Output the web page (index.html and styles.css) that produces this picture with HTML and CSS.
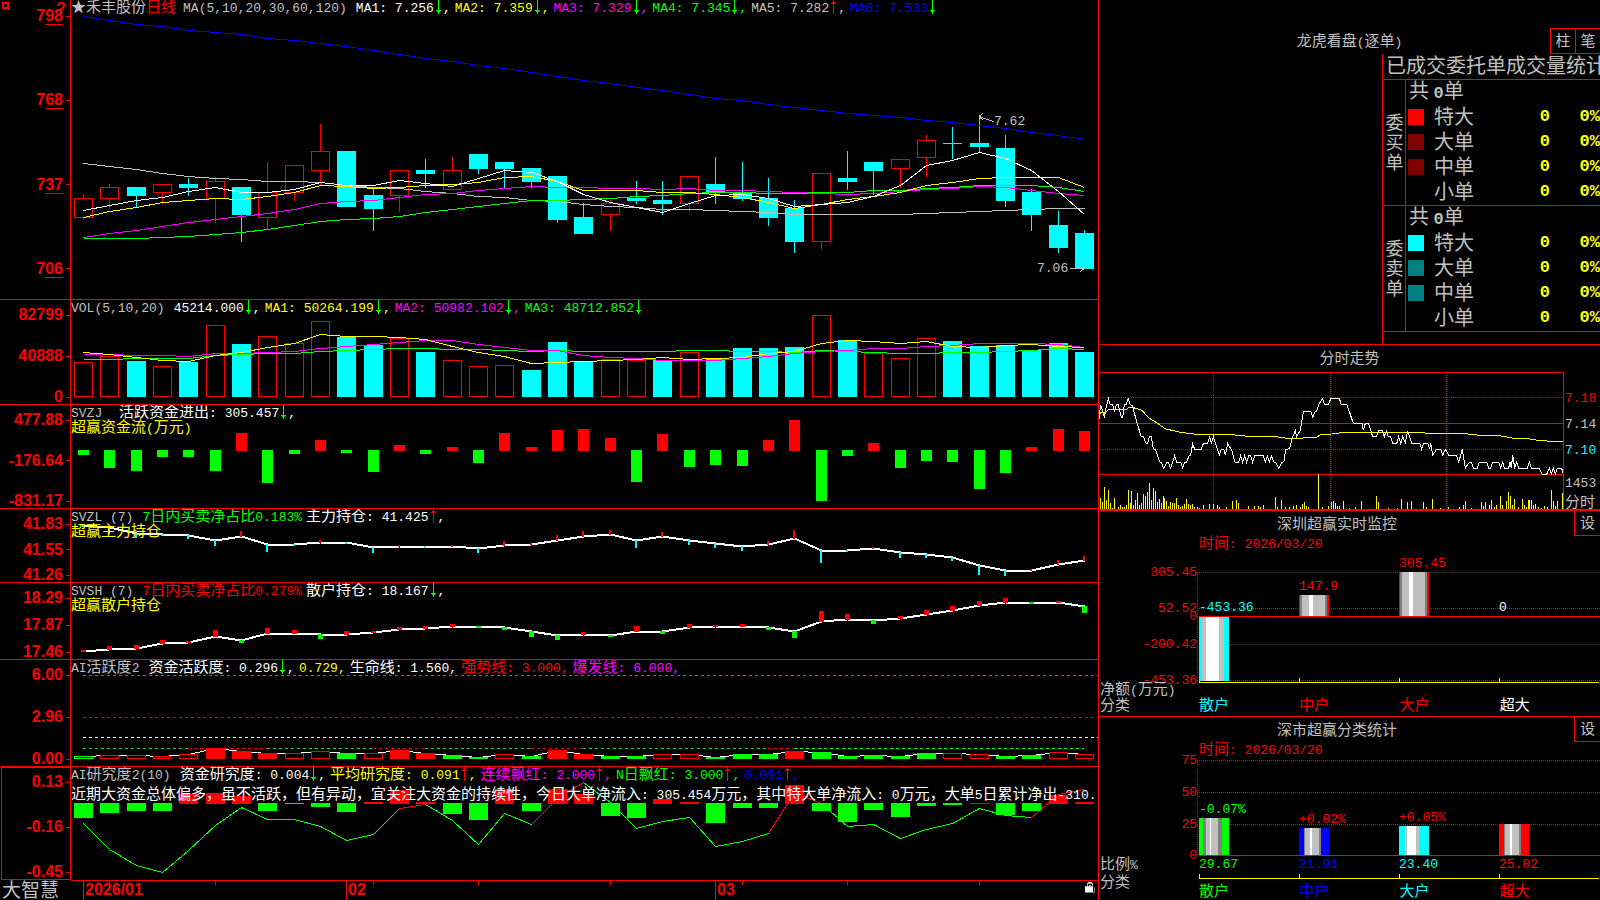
FILE: index.html
```html
<!DOCTYPE html>
<html lang="zh-CN">
<head>
<meta charset="utf-8">
<title>禾丰股份 日线 - 大智慧</title>
<link rel="stylesheet" href="styles.css">
</head>
<body>
<svg class="defs" aria-hidden="true">
  <symbol id="down" viewBox="0 0 9 15"><path d="M4 0h1v10h2v1h-1v1h-1v2h-1v-2h-1v-1h-1v-1h2z" fill="#0f0"/></symbol>
  <symbol id="up" viewBox="0 0 9 15"><path d="M4 0h1v2h1v1h1v1h-2v10h-1v-10h-2v-1h1v-1h1z" fill="#f00"/></symbol>
</svg>
<div class="app">
  <main class="left">
    <section class="panel main-panel">
      <div class="axis">
        <svg class="mark" viewBox="0 0 8 8" shape-rendering="crispEdges"><path d="M1 1h5v5h-5zM6 7h2" fill="none" stroke="#f00" stroke-width="2"/></svg>
        <span class="help">?</span>
        <span>7<u>98</u></span><span>7<u>68</u></span><span>7<u>37</u></span><span>7<u>06</u></span>
      </div>
      <div class="plot" id="main">
        <div class="caption"><span class="name"><i>★禾丰股份</i><i class="red">日线</i><span class="params">MA(5,10,20,30,60,120)</span></span><span class="white">MA1: 7.256<svg class="arr"><use href="#down"/></svg>,</span><span class="yellow">MA2: 7.359<svg class="arr"><use href="#down"/></svg>,</span><span class="magenta">MA3: 7.329<svg class="arr"><use href="#down"/></svg>,</span><span class="green">MA4: 7.345<svg class="arr"><use href="#down"/></svg>,</span><span>MA5: 7.282<svg class="arr"><use href="#up"/></svg>,</span><span class="blue">MA6: 7.533<svg class="arr"><use href="#down"/></svg></span></div>
      </div>
    </section>
    <section class="panel">
      <div class="axis"><span>82799</span><span>40888</span><span>0</span></div>
      <div class="plot" id="vol">
        <div class="caption"><span class="name">VOL(5,10,20)</span><span class="white">45214.000<svg class="arr"><use href="#down"/></svg>,</span><span class="yellow">MA1: 50264.199<svg class="arr"><use href="#down"/></svg>,</span><span class="magenta">MA2: 50982.102<svg class="arr"><use href="#down"/></svg>,</span><span class="green">MA3: 48712.852<svg class="arr"><use href="#down"/></svg></span></div>
      </div>
    </section>
    <section class="panel">
      <div class="axis"><span>477.88</span><span>-176.64</span><span>-831.17</span></div>
      <div class="plot" id="svzj">
        <div class="caption"><span class="name">SVZJ&nbsp;</span><span class="white"><i>活跃资金进出</i>: 305.457<svg class="arr"><use href="#down"/></svg>,</span></div>
        <div class="caption yellow"><span><i>超赢资金流</i>(<i>万元</i>)</span></div>
      </div>
    </section>
    <section class="panel">
      <div class="axis"><span>41.83</span><span>41.55</span><span>41.26</span></div>
      <div class="plot" id="svzl">
        <div class="caption"><span class="name">SVZL (7)</span><span class="green">7<i>日内买卖净占比</i>0.183%</span><span class="white"><i>主力持仓</i>: 41.425<svg class="arr"><use href="#up"/></svg>,</span></div>
        <div class="caption yellow"><span><i>超赢主力持仓</i></span></div>
      </div>
    </section>
    <section class="panel">
      <div class="axis"><span>18.29</span><span>17.87</span><span>17.46</span></div>
      <div class="plot" id="svsh">
        <div class="caption"><span class="name">SVSH (7)</span><span class="red">7<i>日内买卖净占比</i>0.279%</span><span class="white"><i>散户持仓</i>: 18.167<svg class="arr"><use href="#down"/></svg>,</span></div>
        <div class="caption yellow"><span><i>超赢散户持仓</i></span></div>
      </div>
    </section>
    <section class="panel">
      <div class="axis"><span>6.00</span><span>2.96</span><span>0.00</span></div>
      <div class="plot" id="active">
        <div class="caption"><span class="name">AI<i>活跃度</i>2</span><span class="white"><i>资金活跃度</i>: 0.296<svg class="arr"><use href="#down"/></svg>,</span><span class="yellow">0.729,</span><span class="white"><i>生命线</i>: 1.560,</span><span class="red"><i>强势线</i>: 3.000,</span><span class="magenta"><i>爆发线</i>: 6.000,</span></div>
      </div>
    </section>
    <section class="panel selected">
      <div class="axis"><span>0.13</span><span>-0.16</span><span>-0.45</span></div>
      <div class="plot" id="study">
        <div class="caption"><span class="name">AI<i>研究度</i>2(10)</span><span class="white"><i>资金研究度</i>: 0.004<svg class="arr"><use href="#down"/></svg>,</span><span class="yellow"><i>平均研究度</i>: 0.091<svg class="arr"><use href="#up"/></svg>,</span><span class="magenta"><i>连续飘红</i>: 2.000<svg class="arr"><use href="#up"/></svg>,</span><span class="green">N<i>日飘红</i>: 3.000<svg class="arr"><use href="#up"/></svg>,</span><span class="blue">0.091<svg class="arr"><use href="#up"/></svg>,</span></div>
        <div class="caption comment white"><span><i>近期大资金总体偏多，虽不活跃，但有异动，宜关注大资金的持续性，今日大单净流入</i>: 305.454<i>万元，其中特大单净流入</i>: 0<i>万元，大单</i>5<i>日累计净出</i>-310.</span></div>
      </div>
    </section>
    <footer class="timeline">
      <div class="brand">大智慧</div>
      <div class="plot" id="time">
        <svg class="lock" viewBox="0 0 11 12" shape-rendering="crispEdges"><path d="M2 1h1v-1h4v1h1v3h-1v-2h-4v2h-1z" fill="#c0c0c0"/><path d="M4 3h2v1h-2z" fill="#c0c0c0"/><path d="M0 4h8v1h-8z" fill="#c0c0c0"/><path d="M0 5h8v5h-8z" fill="#fff"/><path d="M9 5h1v6h-10v-1h9z" fill="#808080"/></svg>
      </div>
    </footer>
  </main>

  <aside class="right">
    <section class="orders">
      <header class="bar"><h2>龙虎看盘<i>(</i>逐单<i>)</i></h2><div class="tools"><button type="button">柱</button><button type="button">笔</button></div></header>
      <div class="stats">
        <h3>已成交委托单成交量统计</h3>
        <table>
          <colgroup><col class="c-side"><col class="c-key"><col class="c-name"><col class="c-num"><col></colgroup>
          <tbody>
            <tr><th rowspan="5" class="side">委<br>买<br>单</th><td colspan="4" class="total">共 <b>0</b>单</td></tr>
            <tr><td class="key"><span class="swatch s-red"></span></td><th scope="row">特大</th><td>0</td><td>0%</td></tr>
            <tr><td class="key"><span class="swatch s-maroon"></span></td><th scope="row">大单</th><td>0</td><td>0%</td></tr>
            <tr><td class="key"><span class="swatch s-maroon"></span></td><th scope="row">中单</th><td>0</td><td>0%</td></tr>
            <tr><td class="key"></td><th scope="row">小单</th><td>0</td><td>0%</td></tr>
          </tbody>
          <tbody>
            <tr><th rowspan="5" class="side">委<br>卖<br>单</th><td colspan="4" class="total">共 <b>0</b>单</td></tr>
            <tr><td class="key"><span class="swatch s-cyan"></span></td><th scope="row">特大</th><td>0</td><td>0%</td></tr>
            <tr><td class="key"><span class="swatch s-teal"></span></td><th scope="row">大单</th><td>0</td><td>0%</td></tr>
            <tr><td class="key"><span class="swatch s-teal"></span></td><th scope="row">中单</th><td>0</td><td>0%</td></tr>
            <tr><td class="key"></td><th scope="row">小单</th><td>0</td><td>0%</td></tr>
          </tbody>
        </table>
      </div>
    </section>
    <section class="intraday">
      <h2>分时走势</h2>
      <div class="chart"><div class="box" id="intra"></div>
        <div class="scale"><span class="price red">7.18</span><span class="price">7.14</span><span class="price cyan">7.10</span><span class="count">1453</span><span class="zh">分时</span></div>
      </div>
    </section>
    <section class="flow">
      <header class="bar"><h2>深圳超赢实时监控</h2><div class="tools"><button type="button">设</button></div></header>
      <p class="date"><i>时间</i>: 2026/03/20</p>
      <div class="chart" id="flow"></div>
      <div class="cats"><span class="cyan">散户</span><span class="red">中户</span><span class="red">大户</span><span class="white">超大</span></div>
    </section>
    <section class="share">
      <header class="bar"><h2>深市超赢分类统计</h2><div class="tools"><button type="button">设</button></div></header>
      <p class="date"><i>时间</i>: 2026/03/20</p>
      <div class="chart" id="share"></div>
      <div class="cats"><span class="green">散户</span><span class="blue">中户</span><span class="cyan">大户</span><span class="red">超大</span></div>
    </section>
  </aside>
</div>
<script src="charts.js"></script>
</body>
</html>
```
FILE: styles.css
```css
:root {
  --red: #f00;
  --mono: "Liberation Mono", "Noto Sans CJK SC", monospace;
  --zh: "Noto Sans CJK SC", sans-serif;
}
* { box-sizing: border-box; }
body { margin: 0; background: #000; color: #c0c0c0; font: 13px/15px var(--mono); }
i { font: 15px/0 var(--zh); }
h2, h3, p { margin: 0; font-weight: 400; }
.defs { position: absolute; width: 0; height: 0; }

.white { color: #fff; }
.yellow { color: #ff0; }
.magenta { color: #f0f; }
.green { color: #0f0; }
.blue { color: #00f; }
.cyan { color: #0ff; }
.red { color: #f00; }

.app { display: grid; grid-template-columns: minmax(0, 1fr) 502px; height: 100vh; min-height: 720px; overflow: hidden; }

/* Left: stacked indicator panels */
.left { display: grid; grid-template-rows: minmax(0, 300fr) minmax(0, 105fr) minmax(0, 104fr) minmax(0, 74fr) minmax(0, 77fr) minmax(0, 107fr) minmax(0, 114fr) minmax(0, 19fr); }
.panel { display: grid; grid-template-columns: 71px minmax(0, 1fr); border-bottom: 1px solid var(--red); }
.axis { position: relative; display: flex; flex-direction: column; justify-content: space-between; padding-top: 8px; border-right: 1px solid var(--red); color: var(--red); font: bold 16px/14px "Liberation Sans", sans-serif; }
.axis > span:not(.help) { display: flex; align-items: center; justify-content: flex-end; }
.axis > span:not(.help)::after { content: ""; width: 4px; height: 1px; margin-left: 3px; background: var(--red); }
.axis u { text-decoration-thickness: 1px; text-underline-offset: 3px; }
.main-panel .axis { padding-top: 9px; padding-bottom: 23px; }
.mark { position: absolute; left: 2px; top: 2px; width: 8px; height: 8px; }
.help { position: absolute; left: 56px; top: 2px; }
.selected { border-bottom: 0; }
.selected .axis { margin: 0 0 1px 1px; border: 1px solid var(--red); padding-top: 7px; }
.selected .plot { border-bottom: 1px solid var(--red); }

.plot { position: relative; overflow: hidden; }
.canvas { position: absolute; left: 0; top: 0; width: 100%; height: 100%; shape-rendering: crispEdges; }
.canvas * { vector-effect: non-scaling-stroke; }
.caption { position: relative; z-index: 1; display: flex; gap: 4px; height: 15px; line-height: 17px; white-space: pre; }
.caption .name { margin-right: 5px; color: #c0c0c0; }
.params { padding-left: 7px; }
.comment { margin-top: 5px; }
.arr { width: 9px; height: 15px; vertical-align: top; }
.label { position: absolute; z-index: 1; line-height: 16px; white-space: pre; transform: translateY(-50%); }
.label.end { transform: translate(-100%, -50%); }
.label.month { font: bold 16px/16px "Liberation Sans", sans-serif; }

.timeline { display: grid; grid-template-columns: 71px minmax(0, 1fr); }
.brand { padding-left: 2px; font: 19px/16px var(--zh); }
.lock { position: absolute; right: 2px; top: 1px; width: 11px; height: 12px; }

/* Right: order statistics and summary charts */
.right { display: grid; grid-template-rows: minmax(0, 345fr) minmax(0, 166fr) minmax(0, 206fr) minmax(0, 183fr); border-left: 1px solid var(--red); overflow: hidden; }
.right > section { display: flex; flex-direction: column; min-width: 0; border-bottom: 1px solid var(--red); }
.right > .share { border-bottom: 0; }
.right h2 { flex: 1; text-align: center; font: 15px/24px var(--zh); }
.right h2 i { font: 13px/24px var(--mono); }
.bar { display: flex; position: relative; }
.tools { display: flex; }
.tools button { width: 26px; height: 26px; margin-left: -1px; padding: 0 0 2px; border: 1px solid var(--red); background: #000; color: #c0c0c0; font: 15px/22px var(--zh); }
.orders .bar { padding-top: 28px; }
.orders .tools { position: absolute; right: -1px; top: 28px; }
.orders .tools button { padding-bottom: 3px; }
.stats { flex: 1; align-self: flex-end; width: 218px; margin-top: 2px; border-left: 1px solid var(--red); overflow: hidden; }
.stats h3 { height: 25px; padding-left: 3px; font: 20px/21px var(--zh); white-space: nowrap; }
.stats table { table-layout: fixed; width: 216px; margin-left: 1px; border-spacing: 0; border-top: 1px solid var(--red); font: 20px/20px var(--zh); }
.c-side { width: 22px; }
.c-key { width: 28px; }
.c-name { width: 60px; }
.c-num { width: 56px; }
.stats td, .stats th { height: 25px; padding: 0; font-weight: 400; }
.stats tr:first-child td { height: 23px; }
.stats th.side { height: auto; padding: 0 1px 4px; border-right: 1px solid var(--red); border-bottom: 1px solid var(--red); font: 18px/20px var(--zh); }
.stats tr:last-child td, .stats tr:last-child th { height: 27px; border-bottom: 1px solid var(--red); }
.stats td { color: #ff0; text-align: right; font: bold 17px/20px var(--mono); }
.stats td.total { padding-left: 3px; color: #c0c0c0; text-align: left; font: 20px/20px var(--zh); }
.stats .total b { font: bold 17px/20px var(--mono); }
.stats td.key { padding-left: 2px; }
.stats th[scope] { padding-bottom: 2px; text-align: left; }
.swatch { display: block; width: 16px; height: 16px; }
.s-red { background: #f00; }
.s-maroon { background: #800000; }
.s-cyan { background: #0ff; }
.s-teal { background: #008080; }
.orders .bar h2 { height: 24px; }

.right > .intraday { border-bottom-width: 2px; }
.right .intraday h2 { flex: none; height: 27px; line-height: 23px; }
.chart { flex: 1; min-height: 0; position: relative; }
.intraday .chart { display: grid; grid-template-columns: minmax(0, 1fr) 36px; }
.box { position: relative; border-top: 1px solid var(--red); border-right: 1px solid var(--red); }
.scale { display: flex; flex-direction: column; padding: 19px 0 0 1px; line-height: 16px; }
.scale .price { margin-bottom: 10px; }
.scale .count { margin-top: auto; }
.scale .zh { font: 15px/17px var(--zh); }
.flow .tools button, .share .tools button { height: 25px; border-top: 0; border-right: 0; }
.date { height: 17px; padding-left: 100px; line-height: 17px; color: var(--red); }
.cats { display: grid; grid-template-columns: repeat(4, 1fr); height: 22px; padding-left: 100px; font: 15px/20px var(--zh); }
.share .cats { height: 18px; line-height: 16px; }
```
FILE: charts.js
```javascript
const NS = "http://www.w3.org/2000/svg";
const RED = "#f00", CYAN = "#0ff", GREEN = "#0f0", YELLOW = "#ff0", WHITE = "#fff",
      MAGENTA = "#f0f", GRAY = "#c0c0c0", BLUE = "#00f", DARK = "#808080";

function canvas(id, x, y, w, h) {
  const host = document.getElementById(id);
  const svg = document.createElementNS(NS, "svg");
  svg.setAttribute("class", "canvas");
  svg.setAttribute("viewBox", [x, y, w, h].join(" "));
  svg.setAttribute("preserveAspectRatio", "none");
  host.prepend(svg);
  const add = (tag, attrs) => {
    const n = document.createElementNS(NS, tag);
    for (const k in attrs) n.setAttribute(k, attrs[k]);
    svg.append(n);
  };
  return {
    fill: (a, b, cw, ch, c) => add("rect", { x: a, y: b, width: cw, height: ch, fill: c }),
    frame: (a, b, cw, ch, c, bg) => add("rect", { x: a + .5, y: b + .5, width: cw - 1, height: ch - 1, fill: bg || "none", stroke: c }),
    poly: (pts, c, w, dash) => add("polyline", { points: pts.map(p => p.join(",")).join(" "), fill: "none", stroke: c, "stroke-width": w || 1, "stroke-dasharray": dash || "none" }),
    label: (text, lx, ly, cls) => {
      const s = document.createElement("span");
      s.className = "label " + (cls || "");
      s.innerHTML = text;
      s.style.left = (lx - x) / w * 100 + "%";
      s.style.top = (ly - y) / h * 100 + "%";
      host.append(s);
    }
  };
}
const cx = i => Math.round(83 + 26.34 * i);
const series = (ys, from = 0) => ys.map((y, i) => [cx(i + from) + .5, y + .5]);

/* Daily candles: direction, high, body top, body bottom, low */
const main = canvas("main", 71, 0, 1027, 299);
const candles = [
  "R 195 198 218 220", "R 184 187 199 209", "C 187 187 196 207", "R 184 184 193 204", "C 178 184 188 196",
  "R 177 181 199 223", "C 187 187 215 242", "R 162 192 218 230", "R 165 165 193 201", "R 124 151 171 185",
  "C 151 151 207 207", "C 187 195 209 231", "R 170 170 196 212", "C 159 170 174 188", "R 157 170 190 190",
  "C 154 154 169 174", "C 162 162 169 188", "C 168 168 182 188", "C 176 176 220 223", "C 203 217 234 234",
  "R 200 203 215 231", "C 181 198 201 204", "C 181 200 204 215", "R 176 176 204 212", "C 157 184 192 204",
  "C 162 192 199 201", "C 178 198 218 226", "C 200 208 242 253", "R 173 173 242 250", "C 151 178 182 190",
  "C 162 162 171 195", "R 159 159 169 188", "R 135 140 158 177", "C 127 143 144 159", "C 115 143 147 153",
  "C 135 148 201 207", "C 189 192 215 231", "C 211 225 248 253", "C 230 233 269 269"
].map(s => s.split(" ").map((v, k) => k ? +v : v));
candles.forEach(([d, hi, top, bot, lo], i) => {
  const x = cx(i), c = d === "R" ? RED : CYAN;
  if (top > hi) main.fill(x, hi, 1, top - hi, c);
  if (lo > bot) main.fill(x, bot, 1, lo - bot, c);
  d === "R" ? main.frame(x - 9, top, 19, bot - top, c) : main.fill(x - 9, top, 19, bot - top, c);
});
main.poly(series([16,20,24,26,30,32,34,38,40,43,46,50,54,58,61,65,68,72,76,80,83,87,90,94,98,100,104,107,110,113,115,117,120,122,125,128,132,135,139]), BLUE);
main.poly(series([163,166,169,173,176,178,179,181,181,182,185,187,188,191,193,196,197,200,201,204,206,207,209,209,210,211,212,214,214,214,214,214,213,212,211,210,209,208,208]), GRAY);
main.poly(series([238,238,238,237,236,234,232,229,225,221,219,218,216,212,209,206,203,200,200,199,198,196,195,193,192,192,193,193,192,192,190,190,188,187,185,185,185,187,191]), GREEN);
main.poly(series([237,233,230,226,222,219,216,213,209,203,201,200,197,194,193,190,188,186,187,187,188,188,189,188,190,190,191,192,193,194,193,191,189,188,186,187,190,193,195]), MAGENTA);
main.poly(series([217,211,207,202,200,198,199,196,192,185,186,188,187,185,184,182,177,176,181,190,190,190,192,192,194,197,202,208,204,199,196,192,185,182,178,177,177,177,187]), YELLOW);
main.poly(series([210,205,200,197,191,187,192,192,189,182,185,185,180,183,186,178,170,172,181,194,202,207,212,203,195,194,198,206,204,202,196,185,165,160,152,158,170,191,214]), WHITE);
main.poly([[994, 121.5], [979.5, 117], [983, 113]], GRAY);
main.poly([[979.5, 117], [983, 120]], GRAY);
main.label("7.62", 994, 122);
main.poly([[1070, 268.5], [1084, 268.5]], GRAY);
main.poly([[1080, 265], [1084, 268.5], [1080, 272]], GRAY);
main.label("7.06", 1037, 269);

/* Volume */
const vol = canvas("vol", 71, 300, 1027, 104);
const volumeTops = [362,356,361,366,362,325,344,336,343,321,337,345,338,352,360,366,365,370,342,361,359,360,360,352,359,348,348,347,315,340,353,358,338,341,346,345,350,343,352];
const volumeUp = new Set([0,1,3,5,7,8,9,12,14,15,16,20,21,23,28,30,31,32]);
volumeTops.forEach((t, i) => volumeUp.has(i) ? vol.frame(cx(i) - 9, t, 19, 397 - t, RED) : vol.fill(cx(i) - 9, t, 19, 397 - t, CYAN));
vol.poly(series([359,359,358,358,358,355,354,353,353,351,350,349,348,348,349,349,350,351,350,351,351,351,351,350,350,351,351,352,350,351,352,353,353,352,352,351,350,348,349]), GREEN);
vol.poly(series([354,354,355,355,356,353,353,352,351,348,346,344,342,340,340,344,347,350,350,355,357,358,360,360,360,358,356,353,351,350,348,348,346,345,343,343,343,344,347]), MAGENTA);
vol.poly(series([352,354,357,360,361,355,352,347,343,334,336,336,337,339,346,352,356,363,362,361,360,359,357,359,358,357,353,351,343,340,341,343,341,346,347,345,344,346,347]), YELLOW);

/* Signed columns around a zero line */
function columns(c, zero, half, ends) {
  ends.forEach((e, i) => e > zero
    ? c.fill(cx(i) - half, zero, half * 2 + 1, e - zero, GREEN)
    : c.fill(cx(i) - half, e, half * 2 + 1, zero + 1 - e, RED));
}
const svzj = canvas("svzj", 71, 405, 1027, 103);
columns(svzj, 450, 5, [455,468,471,457,457,471,433,483,454,440,453,472,445,454,447,463,433,447,430,429,438,482,434,467,465,466,440,420,501,456,443,468,461,462,489,473,447,429,431]);

/* Holdings: thick line with signed marks */
function holdings(c, ys, deltas, width, down) {
  c.poly(series(ys), WHITE, 2);
  deltas.forEach((d, i) => {
    const x = cx(i) - Math.floor(width / 2);
    d > 0 ? c.fill(x, ys[i] - d, width, d + 1, RED) : c.fill(x, ys[i], width, -d + 1, down);
  });
}
holdings(canvas("svzl", 71, 509, 1027, 73),
  [525,527,533,534,535,540,536,544,544,542,542,547,546,546,546,548,545,544,540,536,534,540,536,540,543,546,544,538,550,550,548,552,554,557,565,570,570,564,560],
  [-1,-6,-4,-1,-3,-5,5,-7,-1,2,-1,-5,1,-1,1,-4,4,1,5,5,4,-7,4,-4,-4,-4,3,8,-12,-1,1,-5,-3,-3,-9,-5,1,4,4], 2, CYAN);
holdings(canvas("svsh", 71, 583, 1027, 76),
  [651,649,648,643,642,636,640,633,633,634,634,632,629,628,626,626,627,631,635,634,635,631,631,627,626,626,627,631,621,619,620,618,614,610,605,602,602,602,606],
  [1,3,3,3,1,6,-2,5,3,-4,3,1,2,2,2,-1,-2,-5,-4,2,-1,5,-2,3,1,2,-2,-6,10,5,-3,2,4,4,4,4,-1,1,-6], 5, GREEN);

/* Activity */
const act = canvas("active", 71, 660, 1027, 106);
act.poly([[83, 675.5], [1098, 675.5]], MAGENTA, 1, "3 3");
act.poly([[83, 717.5], [1098, 717.5]], RED, 1, "3 3");
act.poly([[83, 737.5], [1098, 737.5]], WHITE, 1, "3 3");
[[0, 4, GREEN], [4, 7, RED], [7, 11, GREEN], [11, 13, RED], [13, 17, GREEN], [17, 19, RED], [19, 26, GREEN], [26, 27, RED], [27, 38, GREEN]]
  .forEach(([a, b, c]) => act.poly([[cx(a), 748.5], [cx(b), 748.5]], c, 1, "3 3"));
const activeTops = [756,755,755,756,754,748,751,753,753,751,753,753,750,753,755,757,754,756,750,754,756,756,754,754,757,754,754,751,752,756,755,756,753,753,754,756,755,752,754];
act.poly(series(activeTops), WHITE);
[..."gooooRRRooGoRRGGoGRRGGooGGGRGGGGGooGGoo"].forEach((k, i) => {
  const t = activeTops[i], x = cx(i) - 9;
  if (k === "R" || k === "G") act.fill(x, t, 19, 759 - t, k === "R" ? RED : GREEN);
  else act.frame(x, t, 19, 759 - t, k === "o" ? RED : GREEN, "#000");
});

/* Research */
const study = canvas("study", 71, 767, 1027, 113);
const research = [823,849,865,872,850,825,807,819,819,826,840,834,808,804,820,844,813,824,798,782,802,828,821,817,846,841,833,792,803,826,824,838,829,823,808,815,817,794,789];
study.poly(series(research), GREEN);
[[12, 13], [17, 19], [26, 28], [36, 38]].forEach(([a, b]) => study.poly(series(research.slice(a, b + 1), a), RED));
columns(study, 803, 9, [818,813,811,811,794,793,796,811,804,807,812,802,790,802,814,820,789,811,789,794,816,818,799,802,823,808,808,785,811,822,810,817,806,805,803,815,811,795,802]);

/* Time scale */
const time = canvas("time", 71, 881, 1027, 19);
[[0, "2026/01"], [10, "02"], [24, "03"]].forEach(([i, t]) => {
  time.fill(cx(i), 881, 1, 19, RED);
  time.label(t, cx(i) + 2, 890, "month red");
});
[1, 5, 11, 15, 20, 25, 29, 34].forEach(i => time.fill(cx(i), 881, 1, 4, RED));

/* Intraday */
const intra = canvas("intra", 27, 99, 1392, 408);
[370, 721, 1069].forEach(x => intra.poly([[x + 1, 99], [x + 1, 507]], RED, 1, "1 1"));
[173, 329].forEach(y => intra.poly([[27, y], [1420, y]], RED, 1, "1 1"));
[251, 404].forEach(y => intra.poly([[27, y], [1420, y]], RED));
const pairs = s => s.split(" ").map(p => p.split(",").map(Number));
pairs("31,33 37,21 43,66 49,27 55,57 61,18 67,3 73,33 85,6 91,12 97,6 103,6 109,12 115,57 121,18 124,54 130,12 136,27 142,48 148,12 154,18 160,45 166,40 172,51 178,78 184,27 190,63 196,54 202,21 208,30 214,18 220,39 223,34 229,24 235,9 241,21 247,18 253,17 259,33 265,12 271,6 277,9 283,15 289,30 295,15 301,12 307,15 313,6 322,6 328,3 340,12 358,15 370,15 382,12 388,6 409,6 427,24 439,27 445,18 475,9 493,9 505,9 511,6 520,12 556,36 562,6 574,27 586,6 598,6 610,9 619,12 631,6 637,15 643,21 649,9 655,6 685,105 697,6 715,9 724,21 730,24 736,18 742,9 748,9 760,24 778,3 796,6 814,24 859,39 865,21 895,3 922,3 934,30 952,21 964,24 1000,21 1010,6 1027,30 1050,3 1075,6 1108,6 1120,12 1126,24 1144,3 1174,21 1180,9 1186,21 1198,12 1204,27 1213,6 1219,12 1231,39 1237,12 1249,24 1255,51 1261,39 1267,12 1273,30 1285,6 1297,30 1303,12 1309,6 1315,27 1318,26 1324,27 1330,12 1336,15 1345,6 1354,3 1363,9 1372,6 1384,57 1390,24 1396,9 1402,24 1416,47")
  .forEach(([x, h]) => intra.fill(x - 1, 507 - h, 3, h, YELLOW));
intra.poly(pairs("27,220 50,215 55,209 108,209 116,203 130,203 156,211 175,233 200,248 225,266 270,277 320,283 425,284 475,289 555,290 600,296 680,292 692,284 725,282 760,277 1000,277 1010,281 1125,281 1180,287 1228,287 1272,295 1315,296 1345,301 1385,304 1420,304"), YELLOW);
intra.poly(pairs("27,236 32,194 37,209 43,233 47,209 55,176 60,193 68,194 73,214 79,194 85,194 94,233 98,232 103,194 108,194 115,176 121,194 127,196 140,245 153,288 160,290 168,309 173,309 178,290 184,290 190,326 197,330 209,366 214,368 221,385 230,367 235,368 242,385 254,347 260,367 272,367 278,384 283,368 290,367 297,347 302,346 308,311 314,328 334,328 340,311 353,309 359,290 364,310 370,290 376,310 388,346 394,328 403,330 406,346 413,311 425,330 434,366 446,367 452,347 458,367 464,347 470,367 476,347 482,347 488,367 494,347 520,347 526,367 532,347 538,366 544,347 551,366 557,367 566,385 575,368 582,364 587,328 599,326 608,290 616,272 620,290 631,271 640,216 662,214 668,232 676,214 680,213 686,194 698,176 704,194 715,193 723,175 748,175 754,194 771,194 790,250 816,250 820,271 826,250 836,251 848,290 859,290 865,272 877,272 883,290 889,272 895,290 902,290 908,311 920,311 926,290 932,311 938,290 946,308 953,272 965,310 990,311 995,328 1000,311 1014,311 1019,328 1022,310 1028,346 1040,328 1052,328 1058,346 1066,328 1076,346 1100,347 1106,366 1112,346 1117,328 1126,384 1138,367 1144,367 1150,384 1162,384 1168,367 1190,367 1196,384 1202,384 1208,367 1226,367 1232,384 1238,367 1243,384 1256,384 1260,367 1264,384 1268,346 1274,382 1280,367 1286,384 1312,384 1318,367 1324,384 1348,385 1356,403 1370,403 1378,385 1384,403 1390,385 1396,403 1402,385 1415,385 1420,403"), WHITE);

/* Striped cylinder bars: [colour, width] pairs from left to right */
function cylinder(c, x, top, bottom, stripes) {
  stripes.forEach(([color, w]) => { c.fill(x, top, w, bottom - top, color); x += w; });
}
function grid(c, dotted, solid, top, bottom, base) {
  dotted.forEach(y => c.poly([[1197, y + .5], [1600, y + .5]], RED, 1, "1 1"));
  c.poly([[1197.5, top], [1197.5, bottom]], RED, 1, "1 1");
  c.fill(1199, solid, 401, 1, RED);
  c.fill(1199, base, 400, 1, YELLOW);
  [1199, 1299, 1399, 1499].forEach(x => c.fill(x, base - 4, 1, 4, YELLOW));
}
const metal = [[RED, 1], [DARK, 2], [GRAY, 7], [WHITE, 4], [GRAY, 12], [DARK, 2], [RED, 2]];
const flow = canvas("flow", 1099, 553, 501, 141);
grid(flow, [572, 608, 644, 680], 616, 572, 680, 682);
cylinder(flow, 1199, 617, 681, [[CYAN, 3], [GRAY, 4], [WHITE, 13], [GRAY, 5], [CYAN, 5]]);
cylinder(flow, 1299, 595, 616, metal);
cylinder(flow, 1399, 572, 616, metal);
[["305.45", 573], ["52.52", 609], ["0", 617], ["-200.42", 645], ["-453.36", 681]].forEach(([t, y]) => flow.label(t, 1197, y, "end red"));
flow.label("-453.36", 1199, 608, "cyan");
flow.label("147.9", 1299, 587, "red");
flow.label("305.45", 1399, 564, "red");
flow.label("0", 1499, 608, "white");
flow.label("<i>净额</i>(<i>万元</i>)", 1100, 691);
flow.label("<i>分类</i>", 1100, 707);

const share = canvas("share", 1099, 759, 501, 123);
grid(share, [760, 792, 824], 855, 760, 855, 878);
const slim = color => [[color, 5], [DARK, 1], [GRAY, 5], [WHITE, 2], [GRAY, 7], [DARK, 2], [color, 8]];
cylinder(share, 1199, 818, 855, [[GREEN, 4], [DARK, 3], [GRAY, 4], [WHITE, 1], [GRAY, 7], [DARK, 4], [GREEN, 7]]);
cylinder(share, 1299, 828, 855, slim(BLUE));
cylinder(share, 1399, 826, 855, [[CYAN, 6], [GRAY, 2], [WHITE, 9], [GRAY, 3], [CYAN, 10]]);
cylinder(share, 1499, 824, 855, slim(RED));
[["75", 761], ["50", 793], ["25", 825], ["0", 856]].forEach(([t, y]) => share.label(t, 1197, y, "end red"));
share.label("-0.07%", 1199, 810, "green");
share.label("+0.02%", 1299, 820, "red");
share.label("+0.05%", 1399, 818, "red");
[["29.67", "green"], ["21.91", "blue"], ["23.40", "cyan"], ["25.02", "red"]].forEach(([t, c], k) => share.label(t, 1199 + k * 100, 865, c));
share.label("<i>比例</i>%", 1100, 866);
share.label("<i>分类</i>", 1100, 884);
```
